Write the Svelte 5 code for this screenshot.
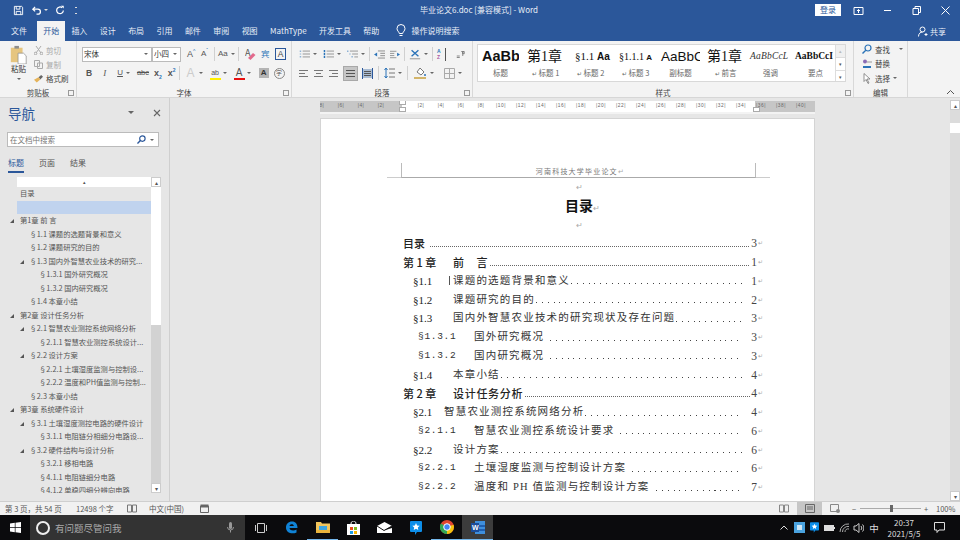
<script>
  const tabs = ['插入', '设计', '布局', '引用', '邮件', '审阅', '视图', 'MathType', '开发工具', '帮助']

  const styles = [
    { cls: 's-bold', text: 'AaBbC', name: '标题' },
    { cls: 's-ch', text: '第1章', name: '标题 1', mark: true },
    { cls: 's-sec', text: '§1.1', tail: 'Aa', name: '标题 2', mark: true },
    { cls: 's-sec3', text: '§1.1.1', tail: 'A', name: '标题 3', mark: true },
    { cls: 's-sub', text: 'AaBbC', name: '副标题' },
    { cls: 's-ch', text: '第1章', name: '前言', mark: true },
    { cls: 's-em', text: 'AaBbCcL', name: '强调' },
    { cls: 's-key', text: 'AaBbCcI', name: '要点' }
  ]

  const navItems = [
    { t: '目录', l: 0 },
    { t: '', l: 0, sel: true },
    { t: '第1章 前 言', l: 0, open: true },
    { t: '§1.1 课题的选题背景和意义', l: 1 },
    { t: '§1.2 课题研究的目的', l: 1 },
    { t: '§1.3 国内外智慧农业技术的研究...', l: 1, open: true },
    { t: '§1.3.1 国外研究概况', l: 2 },
    { t: '§1.3.2 国内研究概况', l: 2 },
    { t: '§1.4 本章小结', l: 1 },
    { t: '第2章 设计任务分析', l: 0, open: true },
    { t: '§2.1 智慧农业测控系统网络分析', l: 1, open: true },
    { t: '§2.1.1 智慧农业测控系统设计...', l: 2 },
    { t: '§2.2 设计方案', l: 1, open: true },
    { t: '§2.2.1 土壤湿度监测与控制设...', l: 2 },
    { t: '§2.2.2 温度和PH值监测与控制...', l: 2 },
    { t: '§2.3 本章小结', l: 1 },
    { t: '第3章 系统硬件设计', l: 0, open: true },
    { t: '§3.1 土壤湿度测控电路的硬件设计', l: 1, open: true },
    { t: '§3.1.1 电阻链分相细分电路设...', l: 2 },
    { t: '§3.2 硬件结构与设计分析', l: 1, open: true },
    { t: '§3.2.1 移相电路', l: 2 },
    { t: '§4.1.1 电阻链细分电路', l: 2 },
    { t: '§4.1.2 单稳四细分辨向电路', l: 2 }
  ]

  const toc = [
    { k: 'h', num: '目录', t: '', p: 3, short: true },
    { k: 'h', num: '第 1 章', t: '前\u2003言', p: 1 },
    { k: 's', num: '§1.1', t: '课题的选题背景和意义', p: 1, cursor: true },
    { k: 's', num: '§1.2', t: '课题研究的目的', p: 2 },
    { k: 's', num: '§1.3', t: '国内外智慧农业技术的研究现状及存在问题', p: 3 },
    { k: 'd', num: '§1.3.1', t: '国外研究概况', p: 3 },
    { k: 'd', num: '§1.3.2', t: '国内研究概况', p: 3 },
    { k: 's', num: '§1.4', t: '本章小结', p: 4 },
    { k: 'h', num: '第 2 章', t: '设计任务分析', p: 4 },
    { k: 's', num: '§2.1', t: '智慧农业测控系统网络分析', p: 4, tight: true },
    { k: 'd', num: '§2.1.1', t: '智慧农业测控系统设计要求', p: 6 },
    { k: 's', num: '§2.2', t: '设计方案', p: 6 },
    { k: 'd', num: '§2.2.1', t: '土壤湿度监测与控制设计方案', p: 6 },
    { k: 'd', num: '§2.2.2', t: '温度和 PH 值监测与控制设计方案', p: 7 }
  ]

  const rulerMarks = [8, 6, 4, 2, 0, 2, 4, 6, 8, 10, 12, 14, 16, 18, 20, 22, 24, 26, 28, 30, 32, 34, 36, 38, 40]
</script>

<div class="app">
  <header class="titlebar">
    <div class="qat">
      <svg width="11" height="11" viewBox="0 0 12 12"><path d="M1.500 1.500h8l1 1v8h-9z" fill="none" stroke="#fff"/><path d="M3.500 1.500v3h4v-3M3.500 10.500v-3.500h5v3.500" fill="none" stroke="#fff"/></svg>
      <svg class="undo" width="11" height="11" viewBox="0 0 12 12"><path d="M4.500 2 2 4.500 4.500 7M2.500 4.500h5a2.500 2.500 0 0 1 0 5.500H6" fill="none" stroke="#fff" stroke-width="1.400"/></svg>
      <span class="caret white"></span>
      <svg class="redo" width="10" height="10" viewBox="0 0 12 12"><path d="M8.500 3.200A4 4 0 1 0 10 6.500" fill="none" stroke="#fff" stroke-width="1.500"/><path d="M7 .8h3.500v3.500z" fill="#fff"/></svg>
      <span class="qat-more"></span>
    </div>
    <div class="doc-title">毕业论文6.doc [兼容模式] - Word</div>
    <div class="win-controls">
      <span class="login">登录</span>
      <svg class="wc first" width="11" height="11" viewBox="0 0 11 11"><path d="M1 2.500h9v7H1z" fill="none" stroke="#fff"/><path d="M5.500 8V4.500M4 6l1.500-1.500L7 6" fill="none" stroke="#fff"/></svg>
      <svg class="wc" width="11" height="11" viewBox="0 0 11 11"><path d="M2 5.500h7" stroke="#fff"/></svg>
      <svg class="wc" width="11" height="11" viewBox="0 0 11 11"><path d="M2 3.500h5.500v6H2zM4 3.500v-2h5.500v6H7.500" fill="none" stroke="#fff"/></svg>
      <svg class="wc" width="11" height="11" viewBox="0 0 11 11"><path d="M1.500 1.500l8 8M9.500 1.500l-8 8" stroke="#fff"/></svg>
    </div>
  </header>

  <nav class="tabs">
    <span class="tab file">文件</span>
    <span class="tab active">开始</span>
    {#each tabs as t}<span class="tab">{t}</span>{/each}
    <svg class="bulb" width="10" height="13" viewBox="0 0 10 13"><path d="M3.300 9.500C3 7.500 1 7 1 4.500a4 4 0 0 1 8 0C9 7 7 7.500 6.700 9.500zM3.500 11.500h3" fill="none" stroke="#fff"/></svg>
    <span class="tab search-tab">操作说明搜索</span>
    <span class="share">
      <svg width="10" height="11" viewBox="0 0 10 11"><circle cx="4.500" cy="3.500" r="2.500" fill="none" stroke="#fff"/><path d="M.5 10.500c0-3 2-4.500 4-4.500M6.500 8.500h3M8 7v3" fill="none" stroke="#fff"/></svg>
      共享
    </span>
  </nav>

  <section class="ribbon">
    <div class="group g-clip">
      <div class="clip-body">
        <div class="paste">
          <svg width="17" height="19" viewBox="0 0 17 21"><path d="M0 3h13v16H0z" fill="#e6c57f"/><path d="M4 1h5v3H4z" fill="#8d8d8d"/><path d="M8 9h6l3 3v9H8z" fill="#fff" stroke="#8d8d8d" stroke-width=".8"/></svg>
          <span>粘贴</span>
          <span class="caret"></span>
        </div>
        <div class="clip-list">
          <div class="muted">
            <svg width="9" height="9" viewBox="0 0 9 9"><path d="M2 0l5 7M7 0 2 7" stroke="#aaa"/><circle cx="1.500" cy="7.500" r="1.300" fill="none" stroke="#aaa"/><circle cx="7.500" cy="7.500" r="1.300" fill="none" stroke="#aaa"/></svg>
            剪切
          </div>
          <div class="muted">
            <svg width="9" height="9" viewBox="0 0 9 9"><path d="M.5.500h5v6h-5zM3.500 3h5v5.500h-5z" fill="#f3f3f3" stroke="#aaa"/></svg>
            复制
          </div>
          <div>
            <svg width="9" height="9" viewBox="0 0 10 9"><path d="M5 3l3-2.500 2 2L7 5.500z" fill="#666"/><path d="M0 6l5-3 2 2.500L3 9z" fill="#e5b35a"/></svg>
            格式刷
          </div>
        </div>
      </div>
      <div class="group-label">剪贴板<i class="launcher"></i></div>
    </div>

    <div class="group g-font">
      <div class="rows">
        <div class="row r1">
          <span class="combo font-name">宋体<span class="caret"></span></span>
          <span class="combo font-size">小四<span class="caret"></span></span>
          <span class="t a-up">A<sup>^</sup></span>
          <span class="t a-down">A<sup>ˇ</sup></span>
          <i class="vsep"></i>
          <span class="t aa">Aa</span><span class="caret"></span>
          <i class="vsep"></i>
          <svg class="eraser" width="11" height="12" viewBox="0 0 11 12"><text x="0" y="8" font-size="9" fill="#555">A</text><path d="M3 10l5-5 2.500 2-5 5z" fill="#e26a8c"/></svg>
          <span class="t phon">宾</span>
          <span class="t abox">A</span>
        </div>
        <div class="row r2">
          <span class="t fb">B</span>
          <span class="t fi">I</span>
          <span class="t fu">U</span><span class="caret"></span>
          <span class="t abc">abc</span>
          <span class="t x2">x<sub>2</sub></span>
          <span class="t x2 sp">x<sup>2</sup></span>
          <i class="vsep"></i>
          <span class="t fx">A</span><span class="caret"></span>
          <span class="t hl">ab<i class="bar yellow"></i></span><span class="caret"></span>
          <span class="t col">A<i class="bar red"></i></span><span class="caret"></span>
          <span class="t shade">A</span>
          <span class="t circ">字</span>
        </div>
      </div>
      <div class="group-label">字体<i class="launcher"></i></div>
    </div>

    <div class="group g-para">
      <div class="rows">
        <div class="row r1 para1">
          <svg width="11" height="10" viewBox="0 0 15 11"><path d="M5 1.500h10M5 5.500h10M5 9.500h10" stroke="#777"/><path d="M1 1h2v1H1zM1 5h2v1H1zM1 9h2v1H1z" fill="#2b73b8"/></svg><span class="caret"></span>
          <svg class="gl" width="11" height="10" viewBox="0 0 15 11"><path d="M5 1.500h10M5 5.500h10M5 9.500h10" stroke="#777"/><path d="M1 0h2v3H1zM1 4h2v3H1zM1 8h2v3H1z" fill="#2b73b8"/></svg><span class="caret"></span>
          <svg class="gl" width="11" height="10" viewBox="0 0 15 11"><path d="M4 1.500h11M7 5.500h8M10 9.500h5" stroke="#777"/><path d="M0 1h2v1H0zM3 5h2v1H3zM6 9h2v1H6z" fill="#2b73b8"/></svg><span class="caret"></span>
          <i class="vsep"></i>
          <svg width="11" height="9" viewBox="0 0 14 10"><path d="M5 .5h9M8 3.500h6M8 6.500h6M5 9.500h9" stroke="#777"/><path d="M4 2.500v5L0 5z" fill="#2b73b8"/></svg>
          <svg class="gi" width="10" height="9" viewBox="0 0 14 10"><path d="M0 .5h9M0 3.500h6M0 6.500h6M0 9.500h9" stroke="#777"/><path d="M10 2.500v5L14 5z" fill="#2b73b8"/></svg>
          <i class="vsep"></i>
          <svg width="12" height="11" viewBox="0 0 14 12"><path d="M3 1l8 7M11 1 3 8" stroke="#2b73b8" stroke-width="1.600"/><path d="M1 11h12" stroke="#888"/></svg><span class="caret"></span>
          <i class="vsep"></i>
          <span class="sort"><span class="sort-a">A</span><span class="sort-z">Z</span></span>
          <svg class="pil" width="9" height="9" viewBox="0 0 12 10"><path d="M7 1h2v6M9 1h2v3H9zM1 7h4M1 9h4" stroke="#666" fill="none"/></svg>
        </div>
        <div class="row r2 para2">
          <svg width="11" height="9" viewBox="0 0 11 9"><path d="M1 1.500h9M1 4.500h6M1 7.500h9" stroke="#777"/></svg>
          <svg width="11" height="9" viewBox="0 0 11 9"><path d="M1 1.500h9M3 4.500h5M1 7.500h9" stroke="#777"/></svg>
          <svg width="11" height="9" viewBox="0 0 11 9"><path d="M1 1.500h9M4 4.500h6M1 7.500h9" stroke="#777"/></svg>
          <span class="justify"><svg width="11" height="9" viewBox="0 0 11 9"><path d="M1 1.500h9M1 4.500h9M1 7.500h9" stroke="#555"/></svg></span>
          <svg width="11" height="11" viewBox="0 0 11 11"><path d="M1 1h9v9H1z" fill="#a9bcd3"/><path d="M2 3.500h7M2 5.500h7M2 7.500h7" stroke="#555"/><path d="M.5 0v11M10.500 0v11" stroke="#2b579a"/></svg>
          <i class="vsep"></i>
          <svg width="11" height="12" viewBox="0 0 11 12"><path d="M2 1v10M.5 3 2 1l1.500 2M.5 9 2 11l1.500-2" fill="none" stroke="#2b73b8"/><path d="M5 2h6M5 6h6M5 10h6" stroke="#777"/></svg><span class="caret"></span>
          <i class="vsep"></i>
          <svg width="14" height="12" viewBox="0 0 14 12"><path d="M4 5l3-4 4 4-3 3z" fill="#fff" stroke="#777"/><path d="M12 7v2" stroke="#2b73b8" stroke-width="1.500"/><path d="M1 11h12" stroke="#c9a13c" stroke-width="1.500"/></svg><span class="caret"></span>
          <svg class="gl" width="11" height="11" viewBox="0 0 11 11"><path d="M.5.500h10v10H.500zM5.500.500v10M.500 5.500h10" fill="none" stroke="#aaa"/></svg><span class="caret"></span>
        </div>
      </div>
      <div class="group-label">段落<i class="launcher"></i></div>
    </div>

    <div class="group g-styles">
      <div class="gallery">
        <div class="gallery-items">
          {#each styles as s}
            <div class="style">
              <div class="sample {s.cls}">{s.text}{#if s.tail}<b>&nbsp;{s.tail}</b>{/if}</div>
              <div class="style-name">{#if s.mark}<i>↵</i>{/if}{s.name}</div>
            </div>
          {/each}
        </div>
        <div class="gallery-btns">
          <span class="dis">▴</span><span>▾</span><span class="more">▾</span>
        </div>
      </div>
      <div class="group-label">样式<i class="launcher"></i></div>
    </div>

    <div class="group g-edit">
      <div class="edit-list">
        <div>
          <svg width="10" height="10" viewBox="0 0 10 10"><circle cx="6" cy="4" r="3" fill="none" stroke="#2b73b8" stroke-width="1.200"/><path d="M3.800 6.200.5 9.500" stroke="#2b73b8" stroke-width="1.400"/></svg>
          查找<span class="caret ml"></span>
        </div>
        <div>
          <svg width="10" height="10" viewBox="0 0 10 10"><circle cx="3" cy="2.500" r="2" fill="#8a6bb5"/><path d="M5 3h5" stroke="#999"/><path d="M1 8h8" stroke="#2b73b8" stroke-width="2"/></svg>
          替换
        </div>
        <div>
          <svg width="10" height="11" viewBox="0 0 10 11"><path d="M2 .5v8l2-2 2 4 1-.5-2-4h3z" fill="#fff" stroke="#777" stroke-width=".8"/></svg>
          选择<span class="caret"></span>
        </div>
      </div>
      <div class="group-label">编辑</div>
    </div>

    <div class="collapse-col">
      <svg width="9" height="6" viewBox="0 0 9 6"><path d="M1 5l3.500-3.500L8 5" fill="none" stroke="#555"/></svg>
    </div>
  </section>

  <main class="main">
    <aside class="navpane">
      <div class="nav-head">
        <h2>导航</h2>
        <span class="nav-drop"></span>
        <svg width="8" height="8" viewBox="0 0 8 8"><path d="M1 1l6 6M7 1 1 7" stroke="#666" stroke-width="1.100"/></svg>
      </div>
      <div class="nav-search">
        <span>在文档中搜索</span>
        <svg width="9" height="9" viewBox="0 0 10 10"><circle cx="6" cy="4" r="3" fill="none" stroke="#2b579a" stroke-width="1.300"/><path d="M3.800 6.200.5 9.500" stroke="#2b579a" stroke-width="1.500"/></svg>
        <span class="caret"></span>
      </div>
      <div class="nav-tabs">
        <span class="on">标题</span><span>页面</span><span>结果</span>
      </div>
      <div class="nav-tree">
        <div class="tree-col">
          <div class="tree-top">▴</div>
          <div class="tree-items">
            {#each navItems as n}
              <div class="tree-row l{n.l}" class:sel={n.sel}>
                {#if n.open}<i class="tri"></i>{/if}{n.t}
              </div>
            {/each}
          </div>
        </div>
        <div class="nav-scroll">
          <span class="sb-btn">▴</span>
          <span class="sb-thumb"></span>
          <span class="sb-fill"></span>
          <span class="sb-btn">▾</span>
        </div>
      </div>
    </aside>

    <div class="docarea">
      <div class="doc-col">
        <div class="ruler">
          <div class="ruler-track">
            {#each rulerMarks as m, i}
              <span class="mark">{#if i !== 4}|{m}|{/if}</span>
            {/each}
          </div>
          <i class="indent-l"></i>
          <i class="indent-lb"></i>
          <i class="indent-r"></i>
        </div>
        <article class="page">
          <div class="page-header"><span>河南科技大学毕业论文<em>↵</em></span></div>
          <div class="pmark">↵</div>
          <h1>目录<em>↵</em></h1>
          <div class="pmark p2">↵</div>
          <div class="toc">
            {#each toc as r}
              <div class="toc-row {r.k}">
                <span class="num" class:tight={r.tight} class:short={r.short}>{r.num}</span>
                {#if r.cursor}<i class="ibeam"></i>{/if}
                {#if r.t}<span class="txt">{r.t}</span>{/if}
                <span class="dots"></span>
                <span class="pg">{r.p}</span><em>↵</em>
              </div>
            {/each}
          </div>
        </article>
      </div>
      <div class="doc-scroll">
        <span class="sb-btn">▴</span>
        <span class="sb-thumb"></span>
        <span class="sb-fill"></span>
        <span class="sb-btn">▾</span>
      </div>
    </div>
  </main>

  <footer class="status">
    <span class="st-a">第 3 页，共 54 页</span>
    <span class="st-b">12498 个字</span>
    <svg class="st-c" width="10" height="9" viewBox="0 0 10 9"><path d="M.5 1h4v7h-4zM5.500 1h4v7h-4z" fill="none" stroke="#777"/></svg>
    <span class="st-d">中文(中国)</span>
    <svg class="st-e" width="9" height="9" viewBox="0 0 9 9"><path d="M.5 2h8v6.500h-8z" fill="none" stroke="#666"/><path d="M.5.500h8v3h-8z" fill="#666"/></svg>
    <span class="st-grow"></span>
    <svg width="10" height="9" viewBox="0 0 10 9"><path d="M.5 1h4v7h-4zM5.500 1h4v7h-4z" fill="none" stroke="#888"/></svg>
    <span class="view-on"><svg width="10" height="9" viewBox="0 0 10 9"><path d="M.5.500h9v8h-9zM2 3h6M2 5h6" fill="none" stroke="#666"/></svg></span>
    <svg width="10" height="9" viewBox="0 0 10 9"><path d="M.5.500h8v7h-8z" fill="none" stroke="#888"/><circle cx="8" cy="7" r="2" fill="#888"/></svg>
    <span class="zoom-minus">−</span>
    <span class="slider"><i></i></span>
    <span class="zoom-plus">+</span>
    <span class="zoom-val">100%</span>
  </footer>

  <div class="taskbar">
    <svg class="start" width="11" height="11" viewBox="0 0 11 11"><path d="M0 1.500 4.800.8v4.300H0zM5.500.7 11 0v5.100H5.500zM0 5.800h4.800v4.400L0 9.500zM5.500 5.800H11V11l-5.500-.8z" fill="#fff"/></svg>
    <div class="search">
      <span class="ring"></span>
      <span class="ask">有问题尽管问我</span>
      <svg width="7" height="11" viewBox="0 0 7 11"><rect x="2" y="0" width="3" height="7" rx="1.500" fill="#999"/><path d="M.5 5a3 3 0 0 0 6 0M3.500 8v2.500" fill="none" stroke="#999"/></svg>
    </div>
    <div class="tasks">
      <span class="task"><svg width="12" height="10" viewBox="0 0 12 10"><path d="M2.500.5h7v9h-7zM.5 2v6M11.500 2v6" fill="none" stroke="#ccc"/></svg></span>
      <span class="task"><svg width="13" height="13" viewBox="0 0 13 13"><path d="M1 6.500C1 3 3.500.5 7 .5c3.500 0 5.500 2.500 5.500 6.500H4.500c.2 2.800 4.500 3.200 7 1.500v3C7 13.500 1 12 1 6.500zM4.500 5h4.300c0-2.300-4-2.300-4.300 0z" fill="#1083d6"/></svg></span>
      <span class="task lined"><svg width="14" height="12" viewBox="0 0 14 12"><path d="M0 1h5l1 1.500h8V12H0z" fill="#f2c55c"/><path d="M3 5h8v4H3z" fill="#3fa6e0"/><path d="M0 9h14v3H0z" fill="#e8b33c"/></svg></span>
      <span class="task"><svg width="13" height="14" viewBox="0 0 13 14"><path d="M0 3h13v11H0z" fill="#fff"/><path d="M4 3c0-4 5-4 5 0" fill="none" stroke="#fff"/><path d="M3 6h3v3H3z" fill="#e74c1c"/><path d="M7 6h3v3H7z" fill="#7db91f"/><path d="M3 10h3v3H3z" fill="#1c9be7"/><path d="M7 10h3v3H7z" fill="#f4b400"/></svg></span>
      <span class="task"><svg width="15" height="11" viewBox="0 0 15 11"><path d="M0 4 7.500 0 15 4v7H0z" fill="#fff"/><path d="M0 4l7 4.500L15 4" fill="none" stroke="#111"/><path d="M15 4 7 8.500 15 6z" fill="#111"/></svg></span>
      <span class="task"><svg width="12" height="14" viewBox="0 0 12 14"><path d="M0 1a1 1 0 0 1 1-1h10a1 1 0 0 1 1 1v9a1 1 0 0 1-1 1H7l-2 3v-3H1a1 1 0 0 1-1-1z" fill="#0d8ee9"/><path d="M6 2l1.100 2.400 2.600.3-1.900 1.800.5 2.600L6 7.800 3.700 9.100l.5-2.600L2.300 4.700l2.600-.3z" fill="#fff"/></svg></span>
      <span class="task lined"><svg width="14" height="14" viewBox="0 0 14 14"><circle cx="7" cy="7" r="7" fill="#e0452f"/><path d="M7 7 13.600 4.800A7 7 0 0 1 7 14z" fill="#f4c20d"/><path d="M7 7 7 14A7 7 0 0 1 .9 3.500z" fill="#31a853"/><circle cx="7" cy="7" r="3.300" fill="#4285f4" stroke="#fff"/></svg></span>
      <span class="task word"><svg width="14" height="13" viewBox="0 0 14 13"><path d="M4 0h10v13H4z" fill="#3f8fdc"/><path d="M4 4h10v2H4zM4 8h10v2H4z" fill="#1f5fb0"/><path d="M0 2h8v9H0z" fill="#1b4d9b"/><text x="1" y="9" font-size="7" font-weight="700" fill="#fff" font-family="Liberation Sans">W</text></svg></span>
    </div>
    <div class="tray">
      <svg class="chev" width="8" height="5" viewBox="0 0 8 5"><path d="M.5 4.500 4 1l3.500 3.500" fill="none" stroke="#ddd"/></svg>
      <svg class="tr1" width="11" height="11" viewBox="0 0 11 11"><path d="M0 0h11v11H0z" fill="#4aa3df"/><path d="M3 3h5v5H3z" fill="#cfe8f7"/></svg>
      <svg class="tr2" width="9" height="11" viewBox="0 0 12 14"><path d="M0 1a1 1 0 0 1 1-1h10a1 1 0 0 1 1 1v9a1 1 0 0 1-1 1H7l-2 3v-3H1a1 1 0 0 1-1-1z" fill="#0d8ee9"/><path d="M6 2l1.100 2.400 2.600.3-1.900 1.800.5 2.600L6 7.800 3.700 9.100l.5-2.600L2.300 4.700l2.600-.3z" fill="#fff"/></svg>
      <svg class="tr3" width="11" height="8" viewBox="0 0 11 8"><path d="M0 1h10v6H0z" fill="#ddd"/><path d="M10 3h1v2h-1z" fill="#ddd"/></svg>
      <svg class="tr4" width="11" height="10" viewBox="0 0 11 10"><path d="M1 9a8 8 0 0 1 9-8M3.500 9a5.500 5.500 0 0 1 6.500-5.500M6 9a3 3 0 0 1 4-3" fill="none" stroke="#aaa"/></svg>
      <svg class="tr5" width="11" height="10" viewBox="0 0 11 10"><path d="M1 3h2l3-2.500v9L3 7H1z" fill="none" stroke="#ccc"/><path d="M8 3a3 3 0 0 1 0 4M9.500 1.500a5 5 0 0 1 0 7" fill="none" stroke="#ccc"/></svg>
      <span class="ime">中</span>
      <div class="clock"><span>20:37</span><span>2021/5/5</span></div>
      <svg class="notif" width="11" height="11" viewBox="0 0 11 11"><path d="M.5.500h10v7.500H5L3 10.500V8H.5z" fill="none" stroke="#ddd"/></svg>
    </div>
  </div>
</div>

<style>
  :global(body) { margin: 0; background: #e6e6e6; }
  .app {
    width: 960px;
    height: 540px;
    display: flex;
    flex-direction: column;
    overflow: hidden;
    font-family: "Noto Sans CJK SC", "Noto Sans", sans-serif;
    font-size: 8px;
    color: #444;
  }
  svg { flex: none; display: block; }
  i, em { font-style: normal; }

  .caret {
    display: inline-block;
    width: 0;
    height: 0;
    border-left: 2px solid transparent;
    border-right: 2px solid transparent;
    border-top: 2px solid #666;
    flex: none;
  }
  .caret.white { border-top-color: #ddd; }

  /* title bar */
  .titlebar {
    height: 20px;
    background: #2b579a;
    color: #e8eef7;
    display: flex;
    align-items: center;
    position: relative;
    flex: none;
  }
  .qat { display: flex; align-items: center; padding-left: 13px; }
  .undo { margin-left: 7px; }
  .qat .caret { margin-left: 2px; }
  .redo { margin-left: 7px; }
  .qat-more { width: 2px; height: 5px; margin-left: 10px; border-top: 1px solid #ddd; border-bottom: 1px solid #ddd; }
  .doc-title { position: absolute; left: 420px; top: 3px; line-height: 13px; white-space: nowrap; }
  .win-controls { margin-left: auto; display: flex; align-items: center; }
  .login {
    background: #fff;
    color: #2b579a;
    width: 26px;
    height: 12px;
    line-height: 12px;
    text-align: center;
    margin-right: 12px;
  }
  .wc { margin-right: 18px; }
  .wc:last-child { margin-right: 9px; }

  /* tabs */
  .tabs {
    height: 21px;
    background: #2b579a;
    color: #e8eef7;
    display: flex;
    align-items: flex-end;
    padding-left: 5px;
    flex: none;
  }
  .tab { padding: 0 6.200px; line-height: 18px; white-space: nowrap; height: 19px; }
  .tab.file { padding-left: 6px; margin-right: 4px; }
  .tab.active { background: #f3f3f3; color: #2b579a; padding: 0 6px; height: 20px; line-height: 20px; }
  .bulb { margin: 0 0 4px 10px; }
  .search-tab { padding-left: 6px; }
  .share { margin-left: auto; margin-right: 14px; display: flex; align-items: center; gap: 2px; line-height: 18px; height: 19px; }

  /* ribbon */
  .ribbon {
    height: 57px;
    background: #f3f3f3;
    display: flex;
    flex: none;
    border-bottom: 1px solid #d6d6d6;
    box-sizing: border-box;
  }
  .group {
    border-right: 1px solid #d8d8d8;
    display: flex;
    flex-direction: column;
    box-sizing: border-box;
    height: 56px;
  }
  .group-label {
    height: 8px;
    line-height: 8px;
    text-align: center;
    position: relative;
    color: #444;
    flex: none;
    margin-top: auto;
    font-size: 7.500px;
  }
  .launcher {
    position: absolute;
    right: 2px;
    bottom: 1px;
    width: 4px;
    height: 4px;
    border: 1px solid #999;
    background: #f3f3f3;
  }
  .g-clip { width: 77px; }
  .g-font { width: 215px; }
  .g-para { width: 181px; }
  .g-styles { width: 381px; }
  .g-edit { width: 54px; }
  .clip-body { display: flex; padding: 4px 0 0 10px; }
  .paste { width: 17px; display: flex; flex-direction: column; align-items: center; line-height: 10px; font-size: 7.500px; color: #333; }
  .paste span:nth-child(2) { white-space: nowrap; }
  .paste .caret { margin-top: 4px; }
  .clip-list { margin: -2px 0 0 7px; display: flex; flex-direction: column; }
  .clip-list div { display: flex; align-items: center; gap: 3px; height: 14px; white-space: nowrap; font-size: 7.500px; }
  .clip-list .muted { color: #a8a8a8; }

  .rows { padding-top: 5px; display: flex; flex-direction: column; gap: 3px; }
  .row { display: flex; align-items: center; height: 16px; white-space: nowrap; }
  .g-font .r1 { padding-left: 5px; }
  .combo {
    background: #fff;
    border: 1px solid #bbb;
    height: 15px;
    line-height: 13px;
    display: flex;
    align-items: center;
    justify-content: space-between;
    box-sizing: border-box;
    padding: 0 3px 0 1px;
    color: #333;
    font-size: 7.500px;
    font-family: "Liberation Serif", "Noto Sans CJK SC", serif;
  }
  .font-name { width: 70px; }
  .font-size { width: 29px; }
  .t { display: inline-block; line-height: 14px; font-family: "Liberation Sans", "Noto Sans CJK SC", sans-serif; color: #555; position: relative; }
  .t sup, .t sub { font-size: 5px; line-height: 0; color: #2b73b8; }
  .a-up { margin-left: 6px; font-size: 9px; width: 10px; }
  .a-down { margin-left: 4px; font-size: 8px; width: 10px; }
  .vsep { width: 1px; height: 14px; background: #d0d0d0; flex: none; margin: 0 3px; }
  .aa { font-size: 8px; width: 10px; }
  .r1 .aa + .caret { margin-left: 3px; }
  .eraser { margin-left: 3px; }
  .phon { margin-left: 5px; width: 9px; color: #2b73b8; font-size: 8.500px; }
  .abox {
    margin-left: 5px;
    width: 9px;
    height: 10px;
    line-height: 10px;
    border: 1px solid #2b579a;
    text-align: center;
    font-size: 8.500px;
    color: #444;
  }
  .g-font .r2 { padding-left: 6px; }
  .fb { font-weight: 700; font-size: 8.500px; margin-left: 3px; }
  .fi { font-style: italic; font-family: "Liberation Serif", serif; font-size: 9px; margin-left: 11px; }
  .fu { text-decoration: underline; margin-left: 11px; }
  .fu + .caret { margin-left: 3px; }
  .abc { text-decoration: line-through; font-size: 7.500px; margin-left: 7px; }
  .x2 { font-size: 9px; margin-left: 5px; font-weight: 700; }
  .x2.sp { margin-left: 6px; }
  .fx { font-size: 12px; color: #ccc; margin-left: 3px; width: 10px; text-align: center; }
  .fx + .caret { margin-left: 3px; }
  .hl { width: 11px; margin-left: 7px; text-align: center; font-size: 7px; height: 14px; }
  .hl + .caret, .col + .caret { margin-left: 2px; }
  .col { width: 11px; margin-left: 7px; text-align: center; font-size: 10px; height: 14px; }
  .bar { position: absolute; left: 0; bottom: 0; width: 11px; height: 2.500px; }
  .yellow { background: #ffef00; }
  .red { background: #e81010; }
  .shade { background: #b4b4b4; margin-left: 8px; width: 10px; height: 10px; line-height: 10px; text-align: center; color: #333; font-weight: 700; }
  .circ { margin-left: 5px; width: 9px; height: 9px; line-height: 9px; font-size: 6px; border: 1px solid #888; border-radius: 50%; text-align: center; }

  .para1 { padding-left: 7px; }
  .para1 .caret { margin-left: 3px; }
  .para1 .vsep { margin: 0 4px; }
  .gl { margin-left: 6px; }
  .gi { margin-left: 5px; }
  .pil { margin-left: 10px; }
  .sort {
    width: 9px;
    height: 13px;
    display: flex;
    flex-direction: column;
    font: 700 5px/6.500px "Liberation Sans", sans-serif;
    border-right: 1px solid #555;
    box-sizing: border-box;
    flex: none;
  }
  .sort-a { color: #2b73b8; }
  .sort-z { color: #a9539f; }
  .para2 { padding-left: 6px; gap: 4px; }
  .para2 .caret { margin-left: -1px; }
  .para2 .vsep { margin: 0 1px; }
  .justify { width: 15px; height: 15px; background: #c6c6c6; border: 1px solid #a8a8a8; box-sizing: border-box; display: flex; align-items: center; justify-content: center; }

  .gallery {
    margin: 3px 0 0 4px;
    width: 369px;
    height: 38px;
    background: #fff;
    border: 1px solid #d8d8d8;
    box-sizing: border-box;
    display: flex;
  }
  .gallery-items { flex: 1; display: flex; overflow: hidden; }
  .style { width: 45px; flex: none; text-align: center; overflow: hidden; }
  .sample { height: 22px; line-height: 23px; white-space: nowrap; overflow: hidden; color: #111; text-align: left; padding-left: 2px; }
  .sample b { font-family: "Liberation Sans", sans-serif; font-weight: 700; font-size: 10px; }
  .style-name { font-size: 7.500px; color: #666; line-height: 11px; white-space: nowrap; }
  .style-name i { font-size: 6px; margin-right: 2px; }
  .s-bold { font: 700 14.500px/23px "Liberation Sans", sans-serif; padding-left: 4px; width: 37px; }
  .s-ch { font: 400 14px/23px "Liberation Serif", "Noto Sans CJK SC", serif; padding-left: 4px; }
  .s-sec { font: 400 11px/23px "Liberation Serif", serif; padding-left: 7px; }
  .s-sec3 { font: 400 10px/23px "Liberation Serif", serif; padding-left: 6px; }
  .s-sec3 b { font-size: 8px; }
  .s-sub { font: 400 13.500px/23px "Liberation Sans", sans-serif; padding-left: 3px; width: 39px; }
  .s-em { font: italic 400 9.500px/23px "Liberation Serif", serif; letter-spacing: .2px; color: #333; }
  .s-key { font: 700 9.500px/23px "Liberation Serif", serif; }
  .gallery-btns { width: 9px; border-left: 1px solid #ddd; display: flex; flex-direction: column; font-size: 5px; text-align: center; color: #555; }
  .gallery-btns span { flex: 1; line-height: 12px; border-bottom: 1px solid #ddd; }
  .gallery-btns .dis { color: #bbb; background: #f0f0f0; }
  .gallery-btns .more { border-bottom: 0; }
  .edit-list { padding: 1px 0 0 8px; }
  .edit-list div { display: flex; align-items: center; gap: 3px; height: 14.500px; white-space: nowrap; font-size: 7.500px; }
  .ml { margin-left: 6px; }
  .collapse-col { flex: 1; display: flex; align-items: flex-end; justify-content: flex-end; padding: 0 5px 2px 0; }

  /* main */
  .main { flex: 1; display: flex; min-height: 0; background: #e6e6e6; }
  .navpane {
    width: 169px;
    flex: none;
    border-right: 1px solid #cfcfcf;
    display: flex;
    flex-direction: column;
    overflow: hidden;
  }
  .nav-head { display: flex; align-items: center; height: 27px; padding: 2px 0 0 8px; box-sizing: border-box; flex: none; }
  .nav-head h2 { margin: 0; font-size: 13.500px; font-weight: 400; color: #2b579a; line-height: 20px; }
  .nav-drop { width: 0; height: 0; margin-left: 93px; border-left: 3px solid transparent; border-right: 3px solid transparent; border-top: 3px solid #666; }
  .nav-head svg { margin-left: 19px; }
  .nav-search {
    margin: 7px 0 0 7px;
    width: 152px;
    height: 15px;
    background: #fff;
    border: 1px solid #bbb;
    box-sizing: border-box;
    display: flex;
    align-items: center;
    padding: 0 4px 0 2px;
    color: #777;
    font-size: 7.500px;
    flex: none;
  }
  .nav-search span:first-child { flex: 1; }
  .nav-search .caret { margin-left: 4px; }
  .nav-tabs { display: flex; gap: 15px; padding: 10px 0 0 8px; height: 27px; box-sizing: border-box; flex: none; color: #555; line-height: 12px; }
  .nav-tabs .on { color: #2b579a; height: 16px; border-bottom: 2px solid #2b579a; box-sizing: border-box; }
  .nav-tree { display: flex; height: 316px; padding-left: 17px; flex: none; margin-top: 3px; overflow: hidden; }
  .tree-col { width: 134px; flex: none; }
  .tree-top { background: #fff; height: 10px; line-height: 9px; text-align: center; font-size: 5px; color: #555; }
  .tree-row {
    height: 13.500px;
    line-height: 13.500px;
    font-size: 7.300px;
    color: #555;
    white-space: nowrap;
    position: relative;
    box-sizing: border-box;
    padding-left: 3px;
  }
  .l1 { padding-left: 12.500px; }
  .l2 { padding-left: 22px; }
  .sel { background: #c0d3ee; }
  .tri {
    position: absolute;
    margin-left: -10px;
    top: 5px;
    width: 0;
    height: 0;
    border-left: 4px solid transparent;
    border-bottom: 4px solid #555;
  }
  .nav-scroll { width: 10px; flex: none; display: flex; flex-direction: column; background: #d2d2d2; }
  .doc-scroll { width: 10px; flex: none; display: flex; flex-direction: column; background: #dcdcdc; margin-top: 2px; }
  .sb-btn { height: 10px; line-height: 9px; text-align: center; font-size: 6px; background: #fff; border: 1px solid #ccc; box-sizing: border-box; color: #555; flex: none; }
  .nav-scroll .sb-thumb { height: 138px; background: #fff; flex: none; }
  .doc-scroll .sb-thumb { height: 10px; margin-top: 13px; background: #fff; flex: none; }
  .sb-fill { flex: 1; }
  .docarea { flex: 1; display: flex; min-width: 0; justify-content: flex-end; }
  .doc-col { width: 495px; margin-right: 135px; display: flex; flex-direction: column; min-height: 0; overflow: hidden; }

  .ruler {
    height: 11px;
    margin-top: 3px;
    flex: none;
    position: relative;
    background: linear-gradient(90deg, #c6c6c6 82px, #fff 82px, #fff 435px, #c6c6c6 435px);
    overflow: hidden;
    border-bottom: 2px solid #f3f3f3;
  }
  .ruler-track { display: flex; margin-left: -9px; }
  .mark {
    width: 20px;
    height: 11px;
    line-height: 10px;
    font-size: 4.800px;
    letter-spacing: .5px;
    text-align: center;
    flex: none;
    color: #666;
    font-family: "Liberation Sans", sans-serif;
  }
  .indent-l {
    position: absolute;
    left: 79px;
    top: 0;
    width: 5px;
    height: 3px;
    background: #fff;
    border: 1px solid #aaa;
    border-top: 0;
  }
  .indent-lb {
    position: absolute;
    left: 79px;
    bottom: 0;
    width: 5px;
    height: 3px;
    background: #fff;
    border: 1px solid #aaa;
  }
  .indent-r {
    position: absolute;
    left: 433px;
    bottom: 0;
    width: 5px;
    height: 3px;
    background: #fff;
    border: 1px solid #aaa;
  }
  .page {
    margin-top: 4px;
    flex: 1;
    background: #fff;
    border: 1px solid #d4d4d4;
    border-bottom: 0;
    min-height: 0;
    box-sizing: border-box;
    font-family: "Liberation Serif", "Noto Sans CJK SC", serif;
    color: #222;
    overflow: hidden;
    padding: 44px 57px 0 81px;
  }
  .page-header {
    position: relative;
    height: 15px;
    margin-left: -1px;
    width: 355px;
    border-bottom: 1px solid #aaa;
    border-left: 1px solid #bbb;
    border-right: 1px solid #bbb;
    font-size: 7px;
    letter-spacing: 1.200px;
    color: #777;
    text-align: right;
    line-height: 18px;
    padding-right: 130px;
    box-sizing: border-box;
    white-space: nowrap;
  }
  .page-header::before, .page-header::after {
    content: "";
    position: absolute;
    bottom: -1px;
    width: 14px;
    height: 1px;
    background: #ccc;
  }
  .page-header::before { left: -15px; }
  .page-header::after { right: -15px; }
  em { color: #aaa; font-size: 7px; }
  .pmark { text-align: center; color: #aaa; font-size: 8px; line-height: 11px; padding-top: 4px; }
  h1 { margin: 0; text-align: center; font-size: 14px; line-height: 20px; padding: 2px 0 0 6px; font-family: "Noto Sans CJK SC", sans-serif; font-weight: 700; color: #111; height: 20px; }
  h1 em { font-weight: 400; font-size: 8px; }
  .p2 { padding-top: 5px; }
  .toc { margin-left: 1px; width: 360px; padding-top: 3px; }
  .toc-row { display: flex; align-items: center; height: 18.750px; white-space: nowrap; font-size: 10.500px; line-height: 18px; }
  .num { flex: none; }
  .ibeam { flex: none; width: 3px; height: 9px; margin: 0 1px 0 -4px; border-left: 1px solid #555; box-sizing: border-box; }
  .txt { flex: none; letter-spacing: 1.200px; color: #333; }
  .dots {
    flex: 1;
    min-width: 0;
    height: 1px;
    margin: 6px 8px 0 1px;
    background: repeating-linear-gradient(90deg, #444 0 1px, transparent 1px 5.850px);
  }
  .pg { flex: none; font-size: 11.500px; color: #444; }
  .toc-row em { flex: none; width: 5px; margin-left: 1px; font-size: 6px; }
  .h { font-family: "Noto Sans CJK SC", sans-serif; color: #222; }
  .h .num { width: 50px; font-size: 11px; font-weight: 500; }
  .h .num.short { width: auto; margin-right: 3px; }
  .h .txt { letter-spacing: .7px; font-size: 11px; font-weight: 500; color: #222; }
  .h .dots { margin: 7px 1px 0 2px; background: repeating-linear-gradient(90deg, #666 0 1px, transparent 1px 2px); }
  .h .pg { font-family: "Liberation Serif", serif; }
  .s { padding-left: 10px; }
  .s .num { width: 40px; font-size: 11px; }
  .s .num.tight { width: 31px; }
  .d { padding-left: 15px; }
  .d .num { width: 56px; letter-spacing: .700px; font-family: "Liberation Mono", monospace; font-size: 9.500px; color: #333; }
  .d .dots { margin-left: 6px; }

  /* status */
  .status {
    height: 14px;
    background: #f1f1f1;
    border-top: 1px solid #cfcfcf;
    box-sizing: border-box;
    display: flex;
    align-items: center;
    flex: none;
    font-size: 7.500px;
    color: #555;
    padding-left: 5px;
    white-space: nowrap;
  }
  .st-a { width: 71px; }
  .st-b { width: 51px; }
  .st-c { margin-right: 12px; }
  .st-d { width: 51px; }
  .st-grow { flex: 1; }
  .view-on { width: 25px; height: 13px; background: #c6c6c6; display: flex; align-items: center; justify-content: center; margin: 0 8px; }
  .zoom-minus { margin-left: 12px; width: 8px; }
  .slider { width: 61px; height: 1px; background: #aaa; position: relative; }
  .slider i { position: absolute; left: 30px; top: -3px; width: 3px; height: 7px; background: #666; }
  .zoom-plus { width: 8px; margin-left: 3px; }
  .zoom-val { margin-left: 4px; margin-right: 4px; width: 20px; }

  /* taskbar */
  .taskbar {
    height: 25px;
    background: #0b0b0d;
    display: flex;
    align-items: center;
    flex: none;
    color: #ddd;
  }
  .start { margin-left: 10px; }
  .search {
    margin-left: 9px;
    width: 215px;
    height: 25px;
    background: #333;
    display: flex;
    align-items: center;
    box-sizing: border-box;
    padding-left: 6px;
    flex: none;
  }
  .ring { width: 10px; height: 10px; border: 2px solid #eee; border-radius: 50%; flex: none; }
  .ask { margin-left: 5px; font-size: 9.500px; color: #aaa; width: 172px; }
  .tasks { display: flex; height: 25px; }
  .task { width: 31px; height: 25px; display: flex; align-items: center; justify-content: center; box-sizing: border-box; }
  .lined { border-bottom: 1.500px solid #76b9ed; }
  .word { background: #3c3c3c; border-bottom: 1.500px solid #76b9ed; }
  .tray { margin-left: auto; display: flex; align-items: center; padding-right: 15px; }
  .tr1 { margin-left: 5.500px; }
  .tr2 { margin-left: 5px; }
  .tr3 { margin-left: 5px; }
  .tr4 { margin-left: 4px; }
  .tr5 { margin-left: 3px; }
  .ime { margin-left: 4.500px; font-size: 9.500px; width: 12px; text-align: center; }
  .clock { display: flex; flex-direction: column; align-items: center; line-height: 11px; font-size: 8px; width: 48px; }
  .notif { margin-left: 6px; }
</style>
